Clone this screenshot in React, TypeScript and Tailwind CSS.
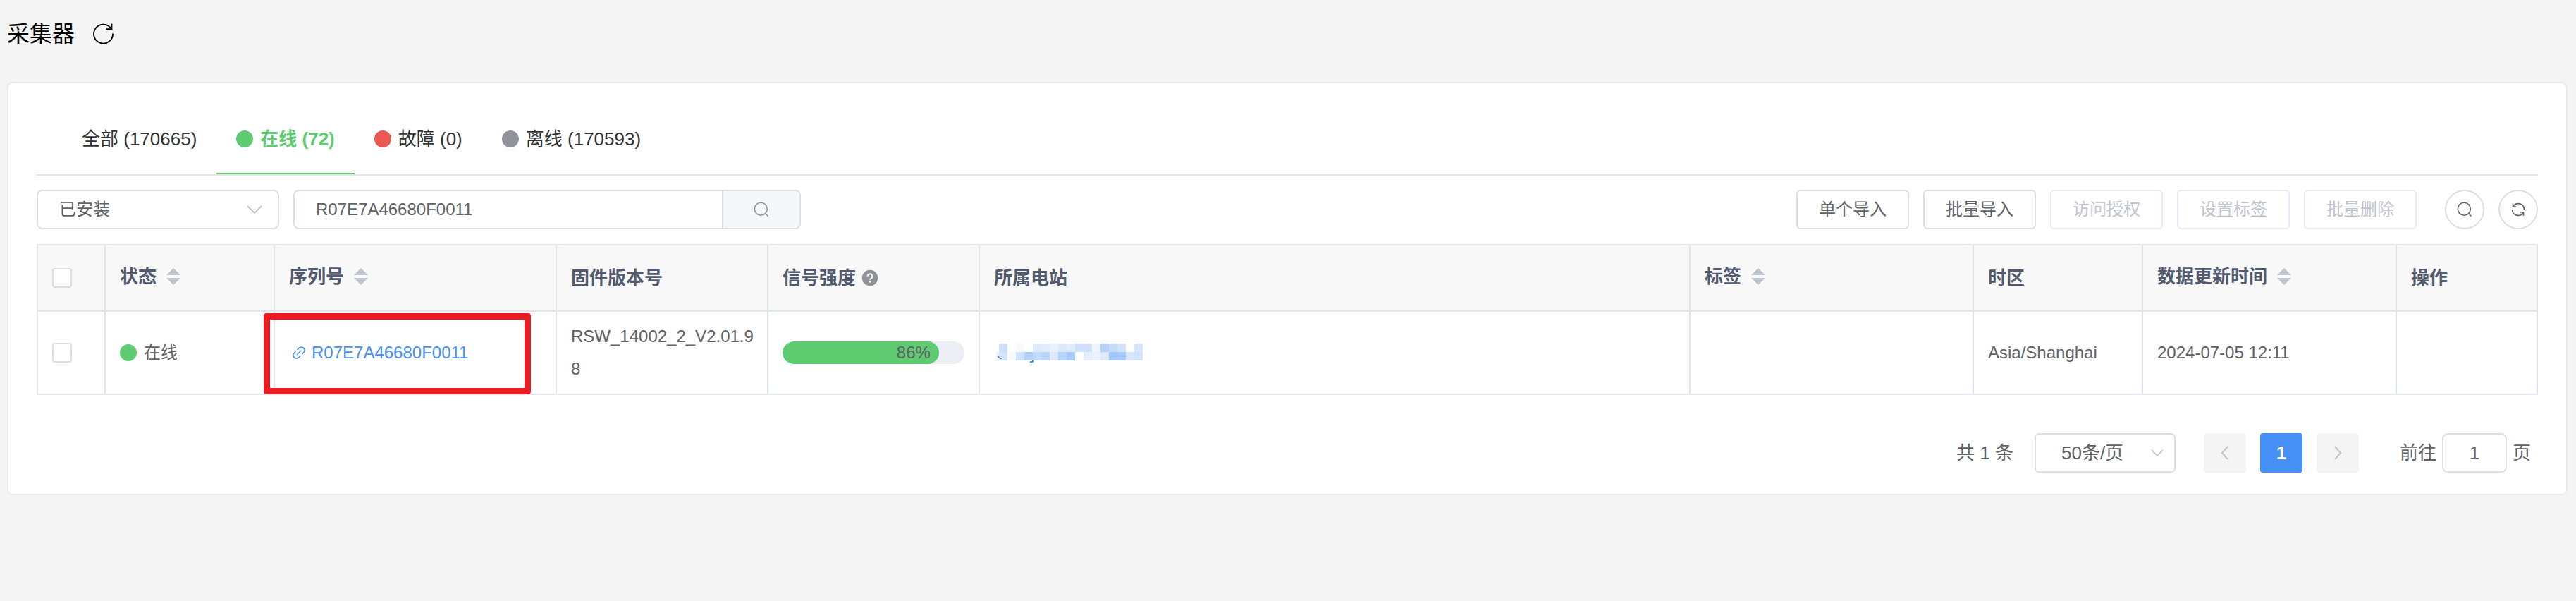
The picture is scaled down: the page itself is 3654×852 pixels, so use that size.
import React from "react";

const FONT = "font-['Liberation_Sans','Noto_Sans_CJK_SC',sans-serif]";

function RefreshRight() {
  return (
    <svg className="size-8" viewBox="0 0 32 32" fill="none" stroke="currentColor" strokeWidth="1.8">
      <path d="M30 15.500A13.500 13.500 0 1 1 28 9" />
      <path d="M28.500 1.500V9.200H20.500" />
    </svg>
  );
}

function Search() {
  return (
    <svg className="size-6" viewBox="0 0 24 24" fill="none" stroke="currentColor" strokeWidth="1.6">
      <circle cx="11.300" cy="11.300" r="9" />
      <path d="M17.500 17.500L21.500 21.500" />
    </svg>
  );
}

function Refresh() {
  return (
    <svg className="size-6" viewBox="0 0 24 24" fill="none" stroke="currentColor" strokeWidth="1.7">
      <path d="M4.800 7.600A8.500 8.500 0 0 1 20.500 12" />
      <path d="M19.200 16.400A8.500 8.500 0 0 1 3.500 12" />
      <path d="M4.500 3.200V8H9.300" />
      <path d="M19.500 20.800V16H14.700" />
    </svg>
  );
}

function LinkIcon() {
  return (
    <svg className="size-6" viewBox="0 0 24 24" fill="none" stroke="currentColor" strokeWidth="1.6">
      <path d="M11.500 8.100L14.200 5.400a4.500 4.500 0 0 1 6.400 6.400L18.200 14.200" />
      <path d="M16.500 15.900L13.800 18.600a4.500 4.500 0 0 1-6.400-6.400L9.800 9.800" />
      <path d="M11 15L17 9" />
    </svg>
  );
}

function Chevron({ className, d }: { className: string; d: string }) {
  return (
    <svg className={className} viewBox="0 0 24 24" fill="none" stroke="currentColor" strokeWidth="2">
      <path d={d} />
    </svg>
  );
}

function Question() {
  return (
    <svg className="size-6 text-[#909399]" viewBox="0 0 24 24">
      <circle cx="12" cy="12" r="11.2" fill="currentColor" />
      <path d="M8.600 9.800a3.400 3.400 0 1 1 4.800 3c-1 .5-1.400 1-1.400 2" fill="none" stroke="white" strokeWidth="1.800" />
      <circle cx="12" cy="17.500" r="1.200" fill="white" />
    </svg>
  );
}

function SortCaret() {
  return (
    <svg className="h-6 w-5 text-[#c0c4cc]" viewBox="0 0 20 24" fill="currentColor">
      <path d="M10 0L20 10H0Z" />
      <path d="M0 14H20L10 24Z" />
    </svg>
  );
}

const tabs = [
  { label: "全部 (170665)", dot: "" },
  { label: "在线 (72)", dot: "bg-[#5ecb71]", active: true },
  { label: "故障 (0)", dot: "bg-[#eb5850]" },
  { label: "离线 (170593)", dot: "bg-[#909399]" },
];

const actions = [
  { label: "单个导入" },
  { label: "批量导入" },
  { label: "访问授权", disabled: true },
  { label: "设置标签", disabled: true },
  { label: "批量删除", disabled: true },
];

const columns = [
  { label: "状态", width: "w-[240px]", sortable: true },
  { label: "序列号", width: "w-[400px]", sortable: true },
  { label: "固件版本号", width: "w-[300px]" },
  { label: "信号强度", width: "w-[300px]", help: true },
  { label: "所属电站", width: "" },
  { label: "标签", width: "w-[402px]", sortable: true },
  { label: "时区", width: "w-[240px]" },
  { label: "数据更新时间", width: "w-[360px]", sortable: true },
  { label: "操作", width: "w-[200px]" },
];

const mosaic = [
  ["#cce0fc", "#ffffff", "#f7fbff", "#ffffff", "#dfe9fc", "#e0ecfb", "#e9f1fd", "#dae9fc", "#e1ecfd", "#cddffd", "#d0e0fc", "#f0f5fe", "#b5d2fb", "#c6dcfb", "#d3e2fd", "#ffffff", "#d7e6fe"],
  ["#d3e4fc", "#f9fafe", "#cde0fc", "#b2d1fb", "#c2dafb", "#b9d5fb", "#dce9fd", "#b5d2fb", "#a5c9fa", "#ffffff", "#e3edfc", "#eaf1fe", "#dceafc", "#a3c5fc", "#a6c8fc", "#d7e6fc", "#d3e2fd"],
];

function MaskedName() {
  return (
    <svg className="h-7 w-[212px]" viewBox="0 0 212 28" shapeRendering="crispEdges">
      {mosaic.map((row, y) =>
        row.map((fill, x) => <rect key={`${y}-${x}`} x={7 + x * 12} y={1 + y * 12} width="12" height="12" fill={fill} />)
      )}
      <path d="M3 13H7V23Q4 20 3 13Z" fill="#e6f0fd" />
      <path d="M5 19L7 19L8 21L11 22V23H8L6 21Z" fill="#458ff7" />
      <path d="M51 26H54V25H56V26L54 28H51Z" fill="#458ff7" />
    </svg>
  );
}

function Tick({ label }: { label: string }) {
  return (
    <input
      type="checkbox"
      aria-label={label}
      className="block size-7 appearance-none rounded border-2 border-[#dcdfe6] bg-white"
    />
  );
}

const cell = "border-r-2 border-[#dfe6ec] pl-5 text-left";

export default function App() {
  return (
    <div className={`min-h-screen bg-[#f4f4f4] pr-3 pl-[10px] text-2xl text-[#606266] ${FONT}`}>
      <header className="flex h-[116px] items-start gap-6 pt-8 text-black">
        <h1 className="text-[32px] leading-8 font-normal">采集器</h1>
        <button aria-label="刷新" className="block">
          <RefreshRight />
        </button>
      </header>

      <main className="rounded-lg border-2 border-[#e6ebf5] bg-white px-10 pb-[30px]">
        <nav className="flex h-[131px] items-stretch border-b-2 border-[#e4e4e4] pt-[31px] pl-9 text-[26px] text-[#303133]">
          {tabs.map((tab) => (
            <button
              key={tab.label}
              className={`flex items-center gap-[10px] border-b-2 px-7 ${
                tab.active ? "border-[#5ecb71] font-bold text-[#5ecb71]" : "border-transparent"
              }`}
            >
              {tab.dot && <span className={`size-6 rounded-full ${tab.dot}`} />}
              <span>{tab.label}</span>
            </button>
          ))}
        </nav>

        <div className="flex items-center gap-5 pt-5 pb-[21px]">
          <div className="grid w-[344px]">
            <select
              aria-label="安装状态"
              className="col-start-1 row-start-1 h-14 appearance-none rounded-lg border-2 border-[#dcdfe6] bg-white px-[30px]"
            >
              <option>已安装</option>
            </select>
            <Chevron
              className="pointer-events-none col-start-1 row-start-1 mr-[23px] size-6 self-center justify-self-end text-[#c0c4cc]"
              d="M2 7L12 17L22 7"
            />
          </div>
          <div className="flex h-14 w-[720px] overflow-hidden rounded-lg border-2 border-[#dcdfe6]">
            <input aria-label="序列号" defaultValue="R07E7A46680F0011" className="min-w-0 flex-1 px-[30px] outline-none" />
            <button
              aria-label="搜索"
              className="flex w-[110px] items-center justify-center border-l-2 border-[#dcdfe6] bg-[#f5f7fa] text-[#909399]"
            >
              <Search />
            </button>
          </div>
          <div className="ml-auto flex gap-5">
            {actions.map((a) => (
              <button
                key={a.label}
                disabled={a.disabled}
                className={`h-14 w-40 rounded-md border-2 ${
                  a.disabled ? "border-[#e6ebf5] text-[#c0c4cc]" : "border-[#dcdfe6]"
                }`}
              >
                {a.label}
              </button>
            ))}
            <button aria-label="显示搜索" className="ml-5 flex size-14 items-center justify-center rounded-full border-2 border-[#dcdfe6]">
              <Search />
            </button>
            <button aria-label="刷新列表" className="flex size-14 items-center justify-center rounded-full border-2 border-[#dcdfe6]">
              <Refresh />
            </button>
          </div>
        </div>

        <table className="w-full table-fixed border-separate border-spacing-0 border-t-2 border-l-2 border-[#dfe6ec]">
          <thead className="bg-[#f8f8f9] text-[26px] text-[#515a6e]">
            <tr className="h-[94px]">
              <th className={`w-24 border-b-2 ${cell}`}>
                <Tick label="全选" />
              </th>
              {columns.map((c) => (
                <th key={c.label} className={`border-b-2 font-bold ${c.width} ${cell}`}>
                  <span className={`flex items-center ${c.sortable ? "gap-[14px] pb-1" : "gap-2"}`}>
                    {c.label}
                    {c.sortable && <SortCaret />}
                    {c.help && <Question />}
                  </span>
                </th>
              ))}
            </tr>
          </thead>
          <tbody>
            <tr className="h-[118px] [&>td]:border-b-2 [&>td]:border-b-[#e6ebf5]">
              <td className={cell}>
                <Tick label="选择 R07E7A46680F0011" />
              </td>
              <td className={cell}>
                <span className="flex items-center gap-[10px]">
                  <span className="size-6 rounded-full bg-[#5ecb71]" />
                  在线
                </span>
              </td>
              <td className={`relative ${cell}`}>
                <a href="#R07E7A46680F0011" className="flex items-center gap-2 text-[#458ff7]">
                  <LinkIcon />
                  R07E7A46680F0011
                </a>
                <span className="pointer-events-none absolute top-[2px] -left-4 h-[115px] w-[379px] rounded border-[9px] border-[#ed1c24]" />
              </td>
              <td className={`pr-4 leading-[46px] break-all ${cell}`}>RSW_14002_2_V2.01.98</td>
              <td className={`pr-5 ${cell}`}>
                <div className="h-8 overflow-hidden rounded-full bg-[#ebeef5]">
                  <div className="h-8 rounded-full bg-[#5ecb71] pr-3 text-right leading-8" style={{ width: "86%" }}>
                    86%
                  </div>
                </div>
              </td>
              <td className={cell}>
                <MaskedName />
              </td>
              <td className={cell} />
              <td className={cell}>Asia/Shanghai</td>
              <td className={cell}>2024-07-05 12:11</td>
              <td className={cell} />
            </tr>
          </tbody>
        </table>

        <footer className="flex items-center justify-end pt-[54px] pr-[10px] text-[26px]">
          <span>共 1 条</span>
          <div className="ml-[30px] grid w-[200px]">
            <select
              aria-label="每页条数"
              className="col-start-1 row-start-1 h-14 appearance-none rounded-md border-2 border-[#dcdfe6] bg-white pl-9"
            >
              <option>50条/页</option>
            </select>
            <Chevron
              className="pointer-events-none col-start-1 row-start-1 mr-4 size-5 self-center justify-self-end text-[#c0c4cc]"
              d="M2 7L12 17L22 7"
            />
          </div>
          <div className="mx-10 flex gap-5">
            <button aria-label="上一页" disabled className="flex h-14 w-[60px] items-center justify-center rounded bg-[#f4f4f5] text-[#c0c4cc]">
              <Chevron className="size-6" d="M16 3L8 12L16 21" />
            </button>
            <button aria-current="page" className="h-14 w-[60px] rounded bg-[#458ff7] font-bold text-white">
              1
            </button>
            <button aria-label="下一页" disabled className="flex h-14 w-[60px] items-center justify-center rounded bg-[#f4f4f5] text-[#c0c4cc]">
              <Chevron className="size-6" d="M8 3L16 12L8 21" />
            </button>
          </div>
          <label className="ml-[18px] flex items-center gap-2">
            前往
            <input defaultValue="1" className="h-14 w-[92px] rounded-lg border-2 border-[#dcdfe6] text-center outline-none" />
            页
          </label>
        </footer>
      </main>
    </div>
  );
}
